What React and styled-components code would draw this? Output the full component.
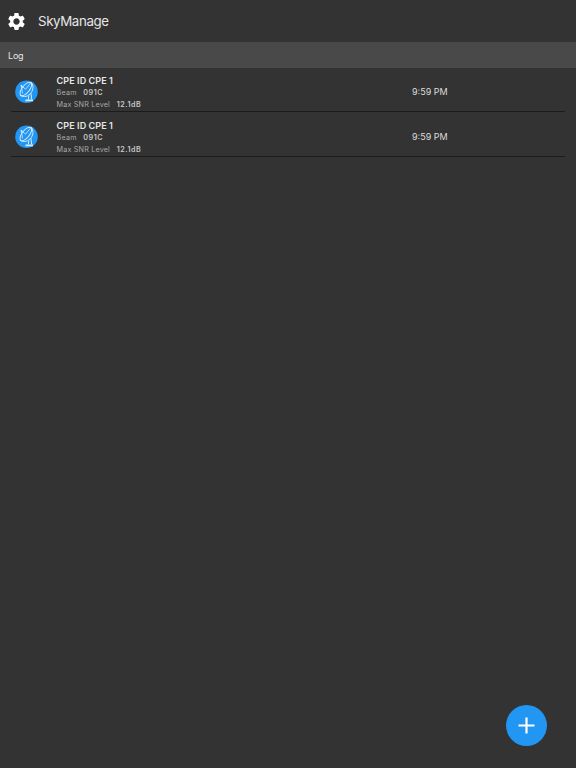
import React from "react";
import styled, { createGlobalStyle } from "styled-components";
import { MdSettings } from "react-icons/md";

const logs = [
  { id: 1, name: "CPE ID CPE 1", beam: "091C", snr: "12.1dB", time: "9:59 PM" },
  { id: 2, name: "CPE ID CPE 1", beam: "091C", snr: "12.1dB", time: "9:59 PM" },
];

const DishIcon = () => (
  <svg width="23" height="24" viewBox="0 0 23 24" fill="none">
    <circle cx="11.5" cy="11.7" r="11.3" fill="#2196f3" />
    <g stroke="#d6ebfc" strokeWidth="1" strokeLinecap="round" strokeLinejoin="round">
      <ellipse cx="10.8" cy="9" rx="3.7" ry="8.2" transform="rotate(38 10.8 9)" />
      <path d="M5.4 15.4C9 17.8 13.6 16.4 16.2 12.6C18.4 9.2 18.6 5.6 16.6 2.6" />
      <path d="M6.4 5.8L10.6 9.2L15.6 3M6.4 5.8L7.4 13" strokeWidth="0.8" />
      <path d="M13.8 16L13.4 19M16 13.6L16.6 19" />
      <path d="M10.4 20.4H18" strokeWidth="1.8" strokeLinecap="butt" />
    </g>
    <circle cx="6.4" cy="5.8" r="0.9" fill="#d6ebfc" />
  </svg>
);

const LogRow = ({ log }) => {
  return (
    <Row>
      <Avatar>
        <DishIcon />
      </Avatar>
      <Info>
        <Name>{log.name}</Name>
        <Detail>
          Beam <b>{log.beam}</b>
        </Detail>
        <Detail>
          Max SNR Level <b>{log.snr}</b>
        </Detail>
      </Info>
      <Time>{log.time}</Time>
    </Row>
  );
};

const App = () => {
  return (
    <Page>
      <GlobalStyle />
      <Header>
        <MdSettings size={21} />
        <Title>SkyManage</Title>
      </Header>
      <SectionTitle>Log</SectionTitle>
      <LogList>
        {logs.map((log) => (
          <LogRow key={log.id} log={log} />
        ))}
      </LogList>
      <AddButton aria-label="Add">
        <svg width="17" height="17" viewBox="0 0 17 17">
          <path d="M8.5 0.5V16.5M0.5 8.5H16.5" stroke="#fff" strokeWidth="2.2" />
        </svg>
      </AddButton>
    </Page>
  );
};

export default App;

const GlobalStyle = createGlobalStyle`
  * {
    box-sizing: border-box;
  }
  body {
    margin: 0;
    background-color: #333;
    font-family: Inter, "Liberation Sans", sans-serif;
  }
`;

const Page = styled.div`
  display: flex;
  flex-direction: column;
  position: relative;
  height: 100vh;
  overflow: hidden;
  background-color: #333;
  color: #e6e6e6;
`;

const Header = styled.div`
  display: flex;
  align-items: center;
  height: 42px;
  padding-left: 6px;

  > svg {
    fill: #fff;
  }
`;

const Title = styled.div`
  margin-left: 11px;
  font-size: 13.3px;
  line-height: 20px;
  letter-spacing: -0.38px;
`;

const SectionTitle = styled.div`
  display: flex;
  align-items: center;
  height: 26px;
  padding: 1px 0 0 8px;
  background-color: #494949;
  font-size: 9px;
  letter-spacing: -0.2px;
`;

const LogList = styled.div`
  display: flex;
  flex-direction: column;
  padding: 0 11px;
`;

const Row = styled.div`
  display: flex;
  height: 45px;
  border-bottom: 1px solid #1c1c1c;

  &:first-child {
    height: 44px;
  }
  &:not(:first-child) {
    padding-top: 1px;
  }
`;

const Avatar = styled.div`
  width: 46px;
  padding: 12px 0 0 4px;

  svg {
    display: block;
  }
`;

const Info = styled.div`
  width: 355px;
  padding-top: 7px;
`;

const Name = styled.div`
  margin-left: -0.4px;
  font-size: 9px;
  font-weight: 600;
  line-height: 12px;
  letter-spacing: 0.08px;
`;

const Detail = styled.div`
  margin-left: -0.4px;
  color: #a8a8a8;
  font-size: 7.2px;
  line-height: 12px;
  letter-spacing: 0.18px;

  b {
    margin-left: 4.5px;
    color: #c8c8c8;
    font-weight: 600;
    letter-spacing: 0.5px;
  }
`;

const Time = styled.div`
  padding-top: 18px;
  color: #dcdcdc;
  font-size: 9px;
  line-height: 12px;
`;

const AddButton = styled.button`
  display: flex;
  align-items: center;
  justify-content: center;
  position: absolute;
  right: 29px;
  bottom: 22px;
  width: 41px;
  height: 41px;
  padding: 0;
  border: none;
  border-radius: 50%;
  background-color: #2196f3;
`;
